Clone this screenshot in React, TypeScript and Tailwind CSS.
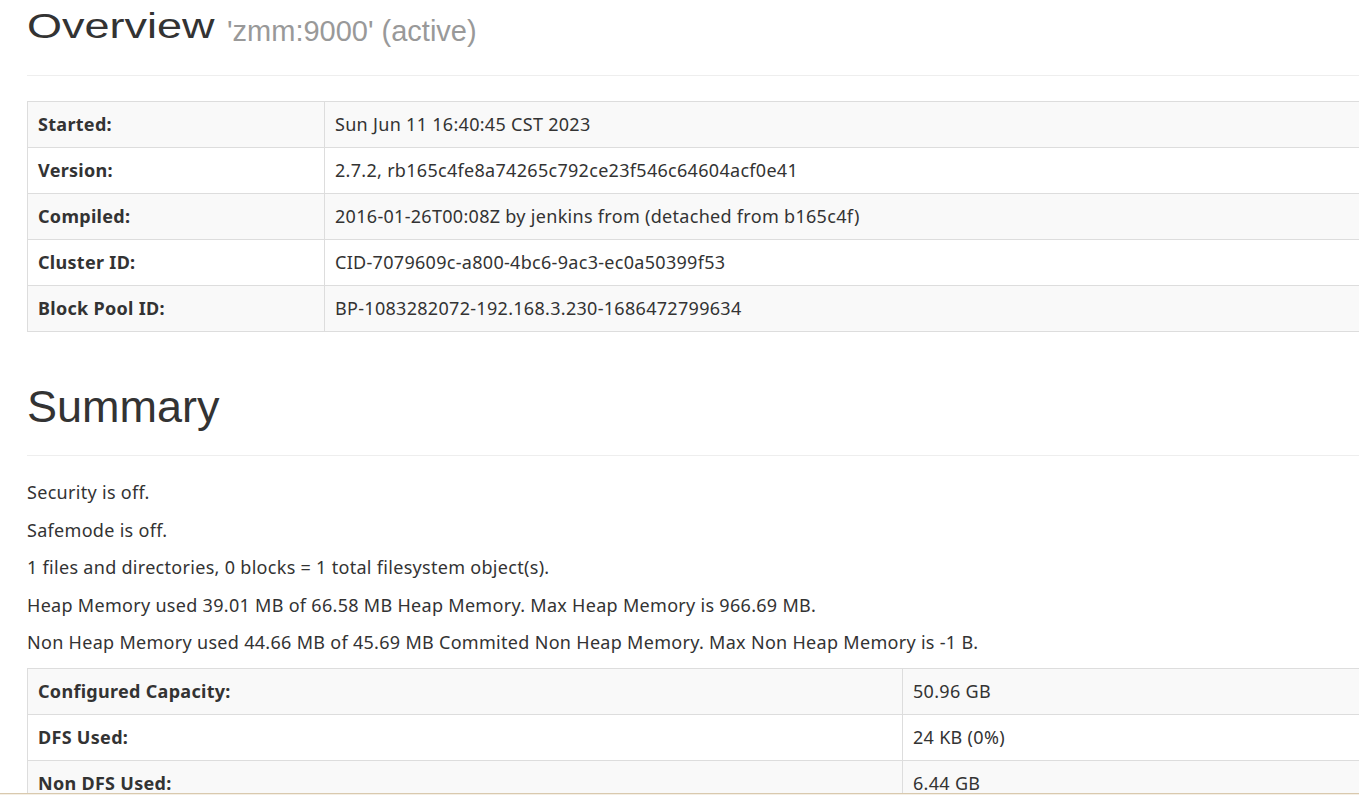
import React from 'react';

type Row = [string, string];

const OVERVIEW: Row[] = [
  ['Started:', 'Sun Jun 11 16:40:45 CST 2023'],
  ['Version:', '2.7.2, rb165c4fe8a74265c792ce23f546c64604acf0e41'],
  ['Compiled:', '2016-01-26T00:08Z by jenkins from (detached from b165c4f)'],
  ['Cluster ID:', 'CID-7079609c-a800-4bc6-9ac3-ec0a50399f53'],
  ['Block Pool ID:', 'BP-1083282072-192.168.3.230-1686472799634'],
];

const CAPACITY: Row[] = [
  ['Configured Capacity:', '50.96 GB'],
  ['DFS Used:', '24 KB (0%)'],
  ['Non DFS Used:', '6.44 GB'],
  ['DFS Remaining:', '44.52 GB (87.36%)'],
  ['Block Pool Used:', '24 KB (0%)'],
];

const SUMMARY_LINES = [
  'Security is off.',
  'Safemode is off.',
  '1 files and directories, 0 blocks = 1 total filesystem object(s).',
  'Heap Memory used 39.01 MB of 66.58 MB Heap Memory. Max Heap Memory is 966.69 MB.',
  'Non Heap Memory used 44.66 MB of 45.69 MB Commited Non Heap Memory. Max Non Heap Memory is -1 B.',
];

const HEADING = "font-['Liberation_Sans',Arial,sans-serif] text-[45px] leading-[45px] font-normal tracking-normal text-[#333]";

function InfoTable({ rows, labelWidth }: { rows: Row[]; labelWidth: string }) {
  return (
    <table className="w-[1420px] border-collapse border border-[#ddd]">
      <tbody>
        {rows.map(([label, value], i) => (
          <tr key={label} className={i % 2 === 0 ? 'bg-[#f9f9f9]' : 'bg-white'}>
            <th className={`${labelWidth} border border-[#ddd] px-[10px] py-[10px] text-left font-bold leading-[25px]`}>
              {label}
            </th>
            <td className="border border-[#ddd] px-[10px] py-[10px] leading-[25px]">{value}</td>
          </tr>
        ))}
      </tbody>
    </table>
  );
}

export default function App() {
  return (
    <div className="h-[795px] overflow-hidden bg-white font-['Noto_Sans',sans-serif] text-[18px] tracking-[0.3px] text-[#333]">
      <div className="pl-[27px]">
        {/* page header: Overview */}
        <div className="mb-[25px] border-b border-[#eee] pb-[15px]">
          <h1 className={`${HEADING} mb-[14px] whitespace-nowrap`}>
            <span className="inline-block origin-[50%_38px] scale-y-[0.78] leading-none">Overview</span>{' '}
            <small className="align-[-3px] text-[29px] leading-none text-[#999]">'zmm:9000' (active)</small>
          </h1>
        </div>

        <InfoTable rows={OVERVIEW} labelWidth="w-[297px]" />

        {/* page header: Summary */}
        <div className="mt-[52px] mb-[24px] border-b border-[#eee] pb-[12px]">
          <h1 className={`${HEADING} mb-[14px]`}>Summary</h1>
        </div>

        {SUMMARY_LINES.map((line) => (
          <p key={line} className="mb-[12.5px] whitespace-nowrap leading-[25px]">
            {line}
          </p>
        ))}

        <InfoTable rows={CAPACITY} labelWidth="w-[875px]" />
      </div>

      <div className="fixed inset-x-0 bottom-0 h-[2px] border-t border-[#d9c9ae] bg-[#f4efe6]" />
    </div>
  );
}
